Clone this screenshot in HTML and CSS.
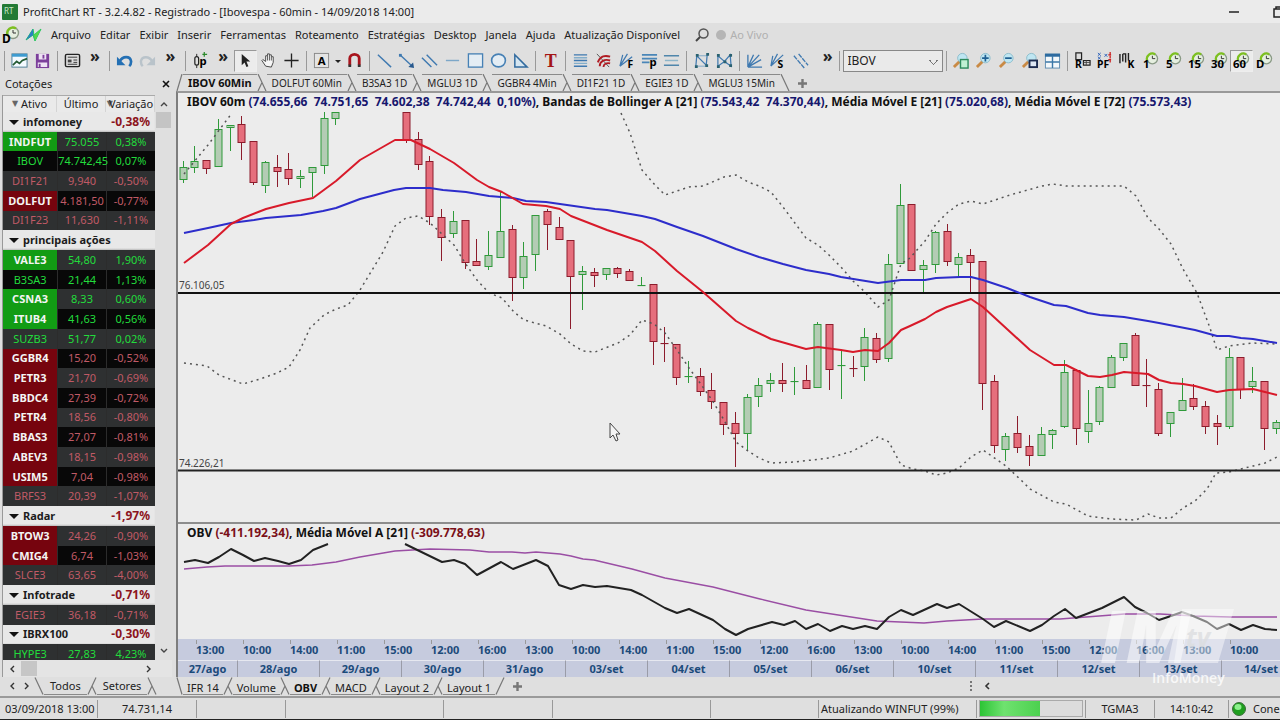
FILE: index.html
```html
<!DOCTYPE html>
<html lang="pt-BR">
<head>
  <meta charset="UTF-8">
  <title>ProfitChart RT</title>
  <link rel="stylesheet" href="styles.css">
</head>
<body>
  <!-- shared shapes -->
  <svg class="defs" width="0" height="0" aria-hidden="true">
    <symbol id="clock" viewBox="0 0 18 18">
      <circle cx="11" cy="7" r="5.5" fill="#e6efe0" stroke="#8a9a86" stroke-width="1.4"/>
      <path d="M5.5 9A5.6 5.6 0 0 1 14 2.6" fill="none" stroke="#7dc020" stroke-width="2.4"/>
      <path d="M11 4v3h3" fill="none" stroke="#333"/>
    </symbol>
    <symbol id="lens" viewBox="0 0 18 18">
      <path d="M2 16l6-6" stroke="#c98a45" stroke-width="3"/>
      <circle cx="11" cy="6.500" r="5" fill="#bfe6f2" stroke="#8bbccb"/>
    </symbol>
    <symbol id="cut-down" viewBox="0 0 10 17">
      <path d="M1 0l8 17M5 8.500L1 17" fill="none" stroke="#777" stroke-width="1.200"/>
    </symbol>
    <symbol id="cut-up" viewBox="0 0 10 17">
      <path d="M9 0L1 17M5 8.500l4 8.500" fill="none" stroke="#777" stroke-width="1.200"/>
    </symbol>
    <symbol id="plus" viewBox="0 0 9 9"><path d="M4.500 0v9M0 4.500h9" stroke="#777" stroke-width="2.400"/></symbol>
  </svg>

  <header class="titlebar">
    <svg class="app-icon" width="16" height="16" viewBox="0 0 16 16"><rect width="16" height="16" rx="1" fill="#237a35"/><text x="2" y="10" font-size="8" fill="#c9e8c9">RT</text></svg>
    <h1>ProfitChart RT - 3.2.4.82 - Registrado - [Ibovespa - 60min - 14/09/2018 14:00]</h1>
    <button class="win-btn" aria-label="Minimizar"><svg width="10" height="10" viewBox="0 0 10 10"><path d="M0 5h10" stroke="#222" stroke-width="1.500"/></svg></button>
    <button class="win-btn last" aria-label="Restaurar"><svg width="12" height="12" viewBox="0 0 12 12"><path d="M1 3h8v8H1zM3 3V1h8v8H9" fill="none" stroke="#222" stroke-width="1.500"/></svg></button>
  </header>

  <nav class="menubar">
    <svg class="menu-d" width="18" height="18" viewBox="0 0 18 18"><use href="#clock"/><text x="0" y="17" font-size="12" font-weight="700">D</text></svg>
    <svg class="menu-leaf" width="17" height="16" viewBox="0 0 17 16"><path d="M1 13L8 2l1 6 7-6-6 12-2-6z" fill="#24c26a" stroke="#24c26a"/><path d="M1 13L8 2l0 6z" fill="#2b7fc4"/><path d="M9 8l7-6-6 12z" fill="#55d84a"/></svg>
    <button>Arquivo</button><button>Editar</button><button>Exibir</button><button>Inserir</button><button>Ferramentas</button><button>Roteamento</button><button>Estratégias</button><button>Desktop</button><button>Janela</button><button>Ajuda</button><button>Atualização Disponível</button>
    <svg class="menu-search" width="14" height="14" viewBox="0 0 14 14"><circle cx="8.500" cy="5.500" r="4.500" fill="none" stroke="#555" stroke-width="1.500"/><path d="M5 9l-4 4" stroke="#444" stroke-width="2"/></svg>
    <span class="live"><i></i>Ao Vivo</span>
  </nav>

  <div class="toolbar">
    <span class="sep"></span>
    <button aria-label="Gráfico"><svg viewBox="0 0 18 18"><rect x="1" y="2" width="16" height="14" fill="#f4faff" stroke="#4c7c94"/><path d="M1 3.500h16" stroke="#3e9bd0" stroke-width="3"/><path d="M2 14l4-4 3 2 3-3 5-2" fill="none" stroke="#245a33" stroke-width="1.800"/></svg></button>
    <button aria-label="Salvar"><svg viewBox="0 0 18 18"><path d="M2 2h14v15H2z" fill="#7c3f9b"/><path d="M5 2h8v6H5zM4 11h10v5H4z" fill="#eee2f4"/><path d="M10 3v4" stroke="#7c3f9b" stroke-width="2"/><path d="M6 12.500v4" stroke="#7c3f9b" stroke-width="2"/></svg></button>
    <span class="sep"></span>
    <button aria-label="Notícias"><svg viewBox="0 0 18 18"><rect x="1.500" y="2.500" width="15" height="13" rx="1.500" fill="#ddd" stroke="#222" stroke-width="1.500"/><path d="M4 5.500h10M10 8.500h4M10 11h4M4 13h10" stroke="#333"/><path d="M4 8h4v3H4z" fill="#444"/></svg></button>
    <button class="more">»</button>
    <span class="sep"></span>
    <button aria-label="Desfazer"><svg viewBox="0 0 18 18"><path d="M4 10c3-6 11-6 12 0 0 3-1 4-2 5" fill="none" stroke="#2470b4" stroke-width="2.800"/><path d="M1 5v9h9z" fill="#2470b4"/></svg></button>
    <button aria-label="Refazer"><svg viewBox="0 0 18 18"><path d="M14 10c-3-6-11-6-12 0 0 3 1 4 2 5" fill="none" stroke="#b9c3ca" stroke-width="2.600"/><path d="M17 5v9H8z" fill="#b9c3ca"/></svg></button>
    <button class="more">»</button>
    <span class="sep"></span>
    <button aria-label="Candle"><svg viewBox="0 0 18 18"><rect x="3" y="5" width="4" height="9" rx="2" fill="none" stroke="#222" stroke-width="1.300"/><path d="M5 2v3M5 14v3" stroke="#222"/><text x="8" y="14" font-size="12" font-weight="700">p</text><path d="M13 0v5M11 2.500h5" stroke="#2b8a2b" stroke-width="1.300"/></svg></button>
    <button class="more">»</button>
    <button class="on" aria-label="Cursor"><svg viewBox="0 0 18 18"><path d="M5 2v12l3-3 2 5 2-1-2-5h4z" fill="#222"/></svg></button>
    <button aria-label="Mover"><svg viewBox="0 0 18 18"><path d="M6 15l-4-6 1-1 3 2V4h2V2h2v1h2v2h2v6l-2 5z" fill="#f6f6f6" stroke="#444"/><path d="M8 4v5M10 3v6M12 5v4" stroke="#555"/></svg></button>
    <button aria-label="Cruz"><svg viewBox="0 0 18 18"><path d="M9 1.500v15M1.500 9h15" stroke="#222" stroke-width="1.400"/></svg></button>
    <span class="sep"></span>
    <button aria-label="Texto"><svg viewBox="0 0 18 18"><rect x="1.500" y="1.500" width="15" height="15" fill="#e4e4e4" stroke="#888"/><text x="5" y="14" font-size="12" font-weight="700">A</text></svg></button>
    <button class="drop" aria-label="Opções"><svg viewBox="0 0 8 8"><path d="M1 3h6L4 6z" fill="#222"/></svg></button>
    <button aria-label="Imã"><svg viewBox="0 0 18 18"><path d="M4 14V7a5 4.500 0 0 1 10 0v7" fill="none" stroke="#a8141c" stroke-width="3"/><path d="M2.500 14.500h3M12.500 14.500h3" stroke="#333" stroke-width="2.500"/></svg></button>
    <span class="sep"></span>
    <button aria-label="Linha"><svg viewBox="0 0 18 18"><path d="M2 3l14 13" stroke="#3f79b0" stroke-width="1.500"/></svg></button>
    <button aria-label="Seta"><svg viewBox="0 0 18 18"><path d="M2 3l12 11" stroke="#3f79b0" stroke-width="1.500"/><path d="M1 2h3v3H1z" fill="#3f79b0"/><path d="M17 17l-1-6-5 5z" fill="#27588d"/></svg></button>
    <button aria-label="Paralelas"><svg viewBox="0 0 18 18"><path d="M1 6l10 10M6 3l11 11" stroke="#3f79b0" stroke-width="1.500"/></svg></button>
    <button aria-label="Horizontal"><svg viewBox="0 0 18 18"><path d="M2 9h14" stroke="#7da7c8" stroke-width="1.500"/></svg></button>
    <button aria-label="Retângulo"><svg viewBox="0 0 18 18"><rect x="1.500" y="2" width="15" height="14" fill="#e4edf4" stroke="#4781b5" stroke-width="1.400"/></svg></button>
    <button aria-label="Elipse"><svg viewBox="0 0 18 18"><ellipse cx="9" cy="9" rx="7.300" ry="6.800" fill="#e4edf4" stroke="#4781b5" stroke-width="1.700"/></svg></button>
    <button aria-label="Triângulo"><svg viewBox="0 0 18 18"><path d="M3 3v13h13z" fill="#d6e6f1" stroke="#326b9f" stroke-width="1.600"/></svg></button>
    <span class="sep"></span>
    <button aria-label="Título"><svg viewBox="0 0 18 18"><text class="serif" x="3" y="16" font-size="19" font-weight="700" fill="#a31515">T</text></svg></button>
    <span class="sep"></span>
    <button aria-label="Retração"><svg viewBox="0 0 18 18"><path d="M2 3h14M2 9h14M2 15h14" stroke="#3f79b0" stroke-width="1.500"/><path d="M2 6h14M2 12h14" stroke="#83aecb" stroke-width="1.500"/></svg></button>
    <button aria-label="Arcos"><svg viewBox="0 0 18 18"><path d="M2 2l13 14" stroke="#555"/><path d="M3 11C5 5 10 3 16 5M5 15c0-5 5-8 11-6M9 16c0-3 3-5 7-4" fill="none" stroke="#b01c24" stroke-width="2"/></svg></button>
    <button aria-label="Leque"><svg viewBox="0 0 18 18"><path d="M2 15L5 3M2 15L10 2M2 15L15 5" stroke="#3f79b0" stroke-width="1.300"/><text x="10" y="17" font-size="11" font-weight="700">F</text></svg></button>
    <button aria-label="Projeção"><svg viewBox="0 0 18 18"><path d="M1 3h16M1 7h16M1 11h8" stroke="#4a86b8" stroke-width="1.800"/><text x="9" y="15" font-size="12" font-weight="700">p</text></svg></button>
    <button aria-label="Canal"><svg viewBox="0 0 18 18"><path d="M1 4h16M1 14h16" stroke="#4f86ab" stroke-width="1.500"/><path d="M2 9h14" stroke="#8db5c9" stroke-width="1.500"/></svg></button>
    <span class="sep"></span>
    <button aria-label="ABC"><svg viewBox="0 0 18 18"><path d="M3 15L4 4l10 10 1-11" fill="none" stroke="#3f79b0" stroke-width="1.300"/><path d="M3 15h11M4 4h11" stroke="#7da7c8"/><path d="M2 14h3v3H2zM3 2h3v3H3zM13 13h3v3h-3zM14 1h3v3h-3z" fill="#2a6170"/></svg></button>
    <button aria-label="XABCD"><svg viewBox="0 0 18 18"><path d="M2 15V4l7 6 6-7 1 12-7-5z" fill="none" stroke="#3f79b0" stroke-width="1.300"/><path d="M1 14h3v3H1zM1 2h3v3H1zM8 9h3v3H8zM14 2h3v3h-3zM14 13h3v3h-3z" fill="#2a6170"/></svg></button>
    <span class="sep"></span>
    <button aria-label="Gann"><svg viewBox="0 0 18 18"><path d="M2 16V3M2 16L8 3M2 16L14 3M2 16l14-8M2 16h15" stroke="#3f79b0" stroke-width="1.400"/></svg></button>
    <button aria-label="Velocidade"><svg viewBox="0 0 18 18"><path d="M2 15L4 4M2 15L9 2M2 15L15 3" stroke="#3f79b0" stroke-width="1.300"/><text x="9" y="17" font-size="11" font-weight="700">S</text></svg></button>
    <button aria-label="Regressão"><svg viewBox="0 0 18 18"><path d="M2 4l11 13M7 2l10 12" stroke="#3f79b0" stroke-width="1.400" stroke-dasharray="5 1"/></svg></button>
    <button class="more wide">»</button>
    <span class="sep"></span>
    <select aria-label="Ativo"><option>IBOV</option></select>
    <span class="sep"></span>
    <button aria-label="Zoom área"><svg viewBox="0 0 18 18"><use href="#lens"/><rect x="9" y="8" width="8" height="9" fill="#bff0d4" stroke="#2c8a5d" stroke-width="1.500"/></svg></button>
    <button aria-label="Mais zoom"><svg viewBox="0 0 18 18"><use href="#lens"/><path d="M11 3v7M7.500 6.500h7" stroke="#1f5f92" stroke-width="1.800"/></svg></button>
    <button aria-label="Menos zoom"><svg viewBox="0 0 18 18"><use href="#lens"/><path d="M7.500 6.500h7" stroke="#1f5f92" stroke-width="1.800"/></svg></button>
    <button aria-label="Zoom tela"><svg viewBox="0 0 18 18"><use href="#lens"/><rect x="9" y="9" width="8" height="7" fill="#dfe8f4" stroke="#1d2c50" stroke-width="2"/></svg></button>
    <button aria-label="Grade"><svg viewBox="0 0 18 18"><rect x="1.500" y="2" width="15" height="15" fill="#f4f8fb" stroke="#5f8db0"/><path d="M1 3.500h16" stroke="#2d6ba0" stroke-width="3"/><path d="M9 4v13M1.500 10.500h15" stroke="#3c78a8" stroke-width="1.500"/></svg></button>
    <span class="sep"></span>
    <button aria-label="Renko"><svg viewBox="0 0 18 18"><path d="M2 1h6v7H2zM10 9h7v5h-7z" fill="#ddd" stroke="#222" stroke-width="1.300"/><path d="M10 11h7M13 9v5" stroke="#444"/><text x="1" y="17" font-size="11" font-weight="700">R</text></svg></button>
    <button aria-label="Ponto figura"><svg viewBox="0 0 18 18"><path d="M2 1l3 3M5 1L2 4M9 2l3 3M12 2L9 5M2 5l3 3M5 5L2 8" stroke="#2b5fb8"/><path d="M15 0v12M13 3h4M13 8h4" stroke="#c22" stroke-width="1.400" stroke-dasharray="3 1"/><text x="1" y="17" font-size="11" font-weight="700">PF</text></svg></button>
    <button aria-label="Kagi"><svg viewBox="0 0 18 18"><path d="M1 2v10M4 2v8M4 2h3v9M10 1v8" fill="none" stroke="#222" stroke-width="1.500"/><text x="9" y="17" font-size="11" font-weight="700">K</text></svg></button>
    <button><svg viewBox="0 0 18 18"><use href="#clock"/><text x="1" y="17" font-size="12" font-weight="700">1</text></svg></button>
    <button><svg viewBox="0 0 18 18"><use href="#clock"/><text x="1" y="17" font-size="12" font-weight="700">5</text></svg></button>
    <button><svg viewBox="0 0 18 18"><use href="#clock"/><text x="0" y="17" font-size="12" font-weight="700">15</text></svg></button>
    <button><svg viewBox="0 0 18 18"><use href="#clock"/><text x="0" y="17" font-size="12" font-weight="700">30</text></svg></button>
    <button class="on"><svg viewBox="0 0 18 18"><use href="#clock"/><text x="0" y="17" font-size="12" font-weight="700">60</text></svg></button>
    <button><svg viewBox="0 0 18 18"><use href="#clock"/><text x="0" y="17" font-size="12" font-weight="700">D</text></svg></button>
  </div>

  <main class="workspace">
    <aside class="quotes">
      <div class="quotes-title"><h2>Cotações</h2><button aria-label="Fechar"><svg width="8" height="8" viewBox="0 0 8 8"><path d="M1 1l6 6M7 1L1 7" stroke="#111" stroke-width="1.600"/></svg></button></div>
      <div class="quotes-box">
        <div class="quotes-head"><span><b class="sort">&#9660;</b> Ativo</span><span>Último</span><span><b class="sort">&#9660;</b>Variação</span></div>
        <div class="quotes-scroll">
          <table>
            <colgroup><col class="c1"><col class="c2"><col class="c3"></colgroup>
            <tbody>
              <tr class="group"><th colspan="2">infomoney</th><td>-0,38%</td></tr>
              <tr class="up hot"><td>INDFUT</td><td>75.055</td><td>0,38%</td></tr>
              <tr class="up"><td>IBOV</td><td>74.742,45</td><td>0,07%</td></tr>
              <tr class="down"><td>DI1F21</td><td>9,940</td><td>-0,50%</td></tr>
              <tr class="down hot"><td>DOLFUT</td><td>4.181,50</td><td>-0,77%</td></tr>
              <tr class="down"><td>DI1F23</td><td>11,630</td><td>-1,11%</td></tr>
            </tbody>
            <tbody>
              <tr class="group"><th colspan="3">principais ações</th></tr>
              <tr class="up hot"><td>VALE3</td><td>54,80</td><td>1,90%</td></tr>
              <tr class="up"><td>B3SA3</td><td>21,44</td><td>1,13%</td></tr>
              <tr class="up hot"><td>CSNA3</td><td>8,33</td><td>0,60%</td></tr>
              <tr class="up hot"><td>ITUB4</td><td>41,63</td><td>0,56%</td></tr>
              <tr class="up"><td>SUZB3</td><td>51,77</td><td>0,02%</td></tr>
              <tr class="down hot"><td>GGBR4</td><td>15,20</td><td>-0,52%</td></tr>
              <tr class="down hot"><td>PETR3</td><td>21,70</td><td>-0,69%</td></tr>
              <tr class="down hot"><td>BBDC4</td><td>27,39</td><td>-0,72%</td></tr>
              <tr class="down hot"><td>PETR4</td><td>18,56</td><td>-0,80%</td></tr>
              <tr class="down hot"><td>BBAS3</td><td>27,07</td><td>-0,81%</td></tr>
              <tr class="down hot"><td>ABEV3</td><td>18,15</td><td>-0,98%</td></tr>
              <tr class="down hot"><td>USIM5</td><td>7,04</td><td>-0,98%</td></tr>
              <tr class="down"><td>BRFS3</td><td>20,39</td><td>-1,07%</td></tr>
            </tbody>
            <tbody>
              <tr class="group"><th colspan="2">Radar</th><td>-1,97%</td></tr>
              <tr class="down hot"><td>BTOW3</td><td>24,26</td><td>-0,90%</td></tr>
              <tr class="down hot"><td>CMIG4</td><td>6,74</td><td>-1,03%</td></tr>
              <tr class="down"><td>SLCE3</td><td>63,65</td><td>-4,00%</td></tr>
            </tbody>
            <tbody>
              <tr class="group"><th colspan="2">Infotrade</th><td>-0,71%</td></tr>
              <tr class="down"><td>EGIE3</td><td>36,18</td><td>-0,71%</td></tr>
            </tbody>
            <tbody>
              <tr class="group"><th colspan="2">IBRX100</th><td>-0,30%</td></tr>
              <tr class="up"><td>HYPE3</td><td>27,83</td><td>4,23%</td></tr>
            </tbody>
          </table>
        </div>
        <div class="vbar">
          <button aria-label="Subir"><svg width="8" height="6" viewBox="0 0 8 6"><path d="M1 5l3-3 3 3" fill="none" stroke="#444" stroke-width="1.400"/></svg></button>
          <i></i>
          <button class="end" aria-label="Descer"><svg width="8" height="6" viewBox="0 0 8 6"><path d="M1 1l3 3 3-3" fill="none" stroke="#444" stroke-width="1.400"/></svg></button>
        </div>
      </div>
      <div class="hbar">
        <button aria-label="Esquerda"><svg width="6" height="8" viewBox="0 0 6 8"><path d="M5 1L2 4l3 3" fill="none" stroke="#333" stroke-width="1.400"/></svg></button>
        <i></i>
        <button class="end" aria-label="Direita"><svg width="6" height="8" viewBox="0 0 6 8"><path d="M1 1l3 3-3 3" fill="none" stroke="#333" stroke-width="1.400"/></svg></button>
      </div>
      <div class="tabs low side">
        <button class="arrow" aria-label="Anterior"><svg width="6" height="8" viewBox="0 0 6 8"><path d="M5 1L2 4l3 3" fill="none" stroke="#333" stroke-width="1.400"/></svg></button>
        <button class="arrow" aria-label="Próxima"><svg width="6" height="8" viewBox="0 0 6 8"><path d="M1 1l3 3-3 3" fill="none" stroke="#333" stroke-width="1.400"/></svg></button>
        <svg class="cut" viewBox="0 0 10 17"><path d="M1 0l8 17" stroke="#777" stroke-width="1.200"/></svg>
        <button class="tab">Todos</button>
        <svg class="cut"><use href="#cut-up"/></svg>
        <button class="tab">Setores</button>
        <svg class="cut"><use href="#cut-down"/></svg>
      </div>
    </aside>

    <section class="charts">
      <div class="tabs top">
        <svg class="cut first" viewBox="0 0 7 17"><path d="M1 17L6 0" stroke="#777" stroke-width="1.200"/></svg>
        <button class="tab active">IBOV 60Min</button>
        <svg class="cut"><use href="#cut-down"/></svg>
        <button class="tab">DOLFUT 60Min</button>
        <svg class="cut"><use href="#cut-down"/></svg>
        <button class="tab">B3SA3 1D</button>
        <svg class="cut"><use href="#cut-down"/></svg>
        <button class="tab">MGLU3 1D</button>
        <svg class="cut"><use href="#cut-down"/></svg>
        <button class="tab">GGBR4 4Min</button>
        <svg class="cut"><use href="#cut-down"/></svg>
        <button class="tab">DI1F21 1D</button>
        <svg class="cut"><use href="#cut-down"/></svg>
        <button class="tab">EGIE3 1D</button>
        <svg class="cut"><use href="#cut-down"/></svg>
        <button class="tab">MGLU3 15Min</button>
        <svg class="cut" viewBox="0 0 10 17"><path d="M1 0l8 17" stroke="#777" stroke-width="1.200"/></svg>
        <button class="add" aria-label="Nova aba"><svg width="9" height="9"><use href="#plus"/></svg></button>
      </div>

      <div class="panes">
        <p class="legend">IBOV 60m <em>(74.655,66  74.751,65  74.602,38  74.742,44  0,10%)</em>, Bandas de Bollinger A [21] <em>(75.543,42  74.370,44)</em>, Média Móvel E [21] <em>(75.020,68)</em>, Média Móvel E [72] <em>(75.573,43)</em></p>
        <svg class="plot" viewBox="178 112 1102 410">
          <g id="candles"></g>
          <g class="band">
            <polyline points="184,174 208,145 232,113"/>
            <polyline points="621,113 630,133 642,170 655,185 665,195 689,187 703,186 724,177 736,175 748,182 759,186 771,192 783,207 806,238 818,245 829,255 841,267 853,281 865,292 878,307 889,300 901,264 910,258 925,241 936,224 947,213 959,204 971,201 983,204 1010,195 1042,186 1053,184 1066,186 1124,186 1136,196 1148,218 1159,229 1171,244 1183,269 1197,293 1210,328 1217,350 1229,346 1253,343 1277,344"/>
            <polyline points="184,363 207,366 219,375 243,384 260,379 277,373 289,367 300,350 310,328 324,315 336,309 348,305 360,290 383,252 395,226 406,218 418,216 430,223 454,245 465,263 477,280 489,293 502,298 514,312 524,320 546,326 560,334 571,344 583,351 595,352 618,343 630,335 642,320 654,324 665,333 677,350 689,368 700,383 712,400 724,420 736,442 748,451 759,458 771,463 795,462 829,458 853,451 878,437 889,442 901,465 913,469 925,471 936,475 947,473 959,468 971,457 983,450 1006,466 1022,481 1030,489 1054,502 1066,504 1088,516 1112,519 1136,520 1148,514 1159,518 1171,518 1183,508 1195,501 1207,489 1216,473 1229,472 1253,466 1265,463 1277,457"/>
          </g>
          <path d="M178 293h1102" stroke="#111" stroke-width="2"/>
          <path d="M178 470.500h1102" stroke="#222" stroke-width="2"/>
          <polyline class="ema72" points="184,233 208,228 231,223 254,220 266,218 301,215 323,211 336,208 360,199 394,190 406,188 430,188 443,190 466,192 489,196 513,198 526,201 546,202 560,204 595,209 607,210 642,216 655,219 677,227 703,236 736,249 759,257 783,264 806,270 829,274 841,277 878,283 901,280 925,280 936,278 960,277 971,277 983,280 1007,288 1030,297 1054,305 1066,306 1088,313 1100,315 1124,317 1148,321 1159,323 1195,330 1217,336 1229,336 1241,338 1253,339 1277,343"/>
          <polyline class="ema21" points="184,263 208,245 231,224 243,218 266,209 289,203 313,198 336,181 360,160 395,140 411,140 430,149 454,163 477,180 489,187 502,192 523,204 546,206 560,209 571,216 607,230 642,242 655,251 677,271 703,292 736,321 748,328 771,339 806,349 818,347 841,350 853,352 865,350 878,351 889,343 901,330 910,326 925,319 936,312 947,307 971,299 983,307 1030,350 1054,365 1066,365 1076,370 1088,376 1100,377 1112,375 1124,372 1148,374 1159,380 1171,383 1183,384 1195,386 1217,392 1229,390 1253,389 1265,392 1277,395"/>
          <text class="level" x="179" y="289">76.106,05</text>
          <text class="level" x="179" y="467">74.226,21</text>
          <path d="M610 423v15l3-3 3 6 2-1-2-6h4z" fill="#f4f4f4" stroke="#444"/>
        </svg>
        <p class="legend split">OBV <em class="neg">(-411.192,34)</em>, Média Móvel A [21] <em class="neg">(-309.778,63)</em></p>
        <svg class="plot" viewBox="178 543 1102 96">
          <polyline class="obv-avg" points="184,569 207,567 225,566 289,566 312,565 336,562 360,557 395,551 430,549 470,550 489,552 512,552 525,553 536,552 560,554 571,556 583,559 594,560 632,569 665,578 713,587 760,599 806,610 877,621 924,623 947,621 983,619 1060,619 1112,615 1124,614 1160,614 1195,616 1230,617 1277,617"/>
          <polyline class="obv" points="184,562 195,560 208,563 219,557 231,549 243,555 254,561 265,558 278,561 289,564 301,560 313,550 328,544"/>
          <polyline class="obv" points="405,544 442,562 454,560 465,564 477,575 501,562 513,569 536,560 548,566 559,585 571,589 583,585 595,587 607,586 631,590 642,595 665,608 677,613 689,609 713,620 725,629 736,635 748,629 772,622 784,625 795,621 806,629 818,624 830,631 842,626 853,629 865,626 877,629 889,617 901,610 913,615 937,604 947,608 959,604 983,619 994,627 1006,621 1030,631 1042,625 1054,616 1065,609 1076,618 1102,608 1112,603 1124,597 1135,607 1147,613 1159,620 1171,616 1182,612 1193,616 1207,622 1217,629 1229,624 1241,630 1253,625 1265,629 1277,630"/>
        </svg>
        <div class="hours">
          <span>13:00</span><span>10:00</span><span>14:00</span><span>11:00</span><span>15:00</span><span>12:00</span><span>16:00</span><span>13:00</span><span>10:00</span><span>14:00</span><span>11:00</span><span>15:00</span><span>12:00</span><span>16:00</span><span>13:00</span><span>10:00</span><span>14:00</span><span>11:00</span><span>15:00</span><span>12:00</span><span>16:00</span><span>13:00</span><span>10:00</span>
        </div>
        <div class="days">
          <span>27/ago</span><span>28/ago</span><span>29/ago</span><span>30/ago</span><span>31/ago</span><span>03/set</span><span>04/set</span><span>05/set</span><span>06/set</span><span>10/set</span><span>11/set</span><span>12/set</span><span>13/set</span><span>14/set</span>
        </div>
        <svg class="watermark" width="140" height="82" viewBox="0 0 140 82">
          <path d="M84 4h52l-16 54H76z" fill="#fff" fill-opacity=".45"/>
          <text x="2" y="58" font-size="72" font-weight="800" font-style="italic" fill="#fff" fill-opacity=".5">IM</text>
          <text x="88" y="42" font-size="26" font-weight="700" font-style="italic" fill="#dcdee0" fill-opacity=".8">tv</text>
          <text x="54" y="78" font-size="14" font-weight="600" fill="#fff" fill-opacity=".8">InfoMoney</text>
        </svg>
      </div>

      <div class="tabs low">
        <svg class="cut first" viewBox="0 0 7 17"><path d="M1 0l5 17" stroke="#777" stroke-width="1.200"/></svg>
        <button class="tab">IFR 14</button>
        <svg class="cut"><use href="#cut-up"/></svg>
        <button class="tab">Volume</button>
        <svg class="cut"><use href="#cut-down"/></svg>
        <button class="tab active">OBV</button>
        <svg class="cut"><use href="#cut-up"/></svg>
        <button class="tab">MACD</button>
        <svg class="cut"><use href="#cut-up"/></svg>
        <button class="tab">Layout 2</button>
        <svg class="cut"><use href="#cut-up"/></svg>
        <button class="tab">Layout 1</button>
        <svg class="cut" viewBox="0 0 10 17"><path d="M1 17L9 0" stroke="#777" stroke-width="1.200"/></svg>
        <button class="add" aria-label="Novo layout"><svg width="9" height="9"><use href="#plus"/></svg></button>
        <div class="pager"><svg width="2" height="10" viewBox="0 0 2 10"><path d="M1 0v10" stroke="#555" stroke-width="1.500" stroke-dasharray="2 2"/></svg><button aria-label="Voltar"><svg width="6" height="8" viewBox="0 0 6 8"><path d="M5 1L2 4l3 3" fill="none" stroke="#333" stroke-width="1.600"/></svg></button></div>
      </div>
    </section>
  </main>

  <footer class="status">
    <span>03/09/2018 13:00</span><span class="mid">74.731,14</span><span></span><span></span><span></span><span></span><span></span>
    <span class="load">Atualizando WINFUT (99%)</span>
    <span class="load"><progress max="100" value="59" aria-label="Progresso"></progress></span>
    <span class="mid">TGMA3</span><span class="mid">14:10:42</span>
    <span class="conn"><svg width="14" height="14" viewBox="0 0 14 14"><circle cx="7" cy="7" r="6.500" fill="#1f9e1f" stroke="#3c6d3c"/><ellipse cx="6" cy="5" rx="3.500" ry="3" fill="#8cf08c"/></svg>Cone</span>
  </footer>
  <script src="chart.js"></script>
</body>
</html>
```

FILE: styles.css
```css
* {
  box-sizing: border-box;
}
html, body {
  margin: 0;
  padding: 0;
}
body {
  min-height: 100vh;
  display: flex;
  flex-direction: column;
  background: #dfdfdf;
  font-family: "Noto Sans", "DejaVu Sans", sans-serif;
  font-size: 11px;
  line-height: 16px;
  color: #222;
  overflow: hidden;
}
button {
  font: inherit;
  color: inherit;
  background: none;
  border: none;
  padding: 0;
  margin: 0;
  white-space: nowrap;
}
svg {
  display: block;
  flex: none;
}
.defs {
  position: absolute;
}
h1, h2, p {
  margin: 0;
  font-size: 11px;
  font-weight: normal;
}

/* title and menu */
.titlebar {
  height: 23px;
  display: flex;
  align-items: center;
  background: #ebebeb;
  padding-left: 2px;
}
.titlebar h1 {
  flex: 1;
  margin-left: 5px;
  white-space: nowrap;
}
.win-btn {
  margin-right: 34px;
}
.win-btn.last {
  margin-right: -5px;
}
.menubar {
  height: 24px;
  display: flex;
  align-items: center;
  gap: 9px;
  padding-left: 2px;
}
.menubar svg, .toolbar svg {
  overflow: visible;
}
.menu-d {
  margin-right: -4px;
}
.menu-search {
  margin-left: 6px;
}
.live {
  display: flex;
  align-items: center;
  gap: 4px;
  margin-left: -2px;
  color: #b0b0b0;
}
.live i {
  width: 10px;
  height: 10px;
  border-radius: 50%;
  background: #b5b5b5;
}

/* toolbar */
.toolbar {
  height: 27px;
  display: flex;
  align-items: center;
  padding: 0 4px 0 1px;
}
.toolbar button {
  flex: 1 0 22px;
  height: 22px;
  display: flex;
  align-items: center;
  justify-content: center;
  border: 1px solid transparent;
}
.toolbar button svg {
  width: 17px;
  height: 17px;
}
.toolbar .serif {
  font-family: "Liberation Serif", serif;
}
.toolbar .on {
  background: #ececec;
  border-color: #999 #eee #eee #999;
}
.toolbar .more {
  font-size: 16px;
  font-weight: bold;
  padding-bottom: 10px;
}
.toolbar .wide {
  flex: 0 0 24px;
  justify-content: flex-end;
  padding-right: 2px;
}
.toolbar .drop {
  flex: 0 0 9px;
}
.toolbar .drop svg {
  width: 8px;
  height: 8px;
}
.sep {
  flex: 0 0 7px;
  height: 20px;
  background: linear-gradient(#999, #999) 3px 0 / 1px 20px no-repeat;
}
.toolbar select {
  flex: 0 0 100px;
  height: 22px;
  appearance: none;
  font: inherit;
  font-size: 12px;
  line-height: 16px;
  color: #222;
  border: 1px solid #888;
  border-radius: 0;
  padding: 0 4px;
  background: linear-gradient(45deg, transparent 45%, #777 45% 60%, transparent 60%) 85px 9px / 5px 5px no-repeat,
    linear-gradient(-45deg, transparent 45%, #777 45% 60%, transparent 60%) 89px 9px / 5px 5px no-repeat, #eaeaea;
}

/* quotes */
.workspace {
  flex: 1;
  display: flex;
}
.quotes {
  flex: 0 0 176px;
  min-width: 0;
  padding: 0 4px 0 2px;
  display: flex;
  flex-direction: column;
}
.quotes-title {
  height: 21px;
  display: flex;
  align-items: center;
  justify-content: space-between;
  padding: 0 2px 2px 3px;
}
.quotes-box {
  display: grid;
  grid-template-columns: minmax(0, 1fr) 17px;
  grid-template-rows: 17px 548px;
  border-left: 1px solid #999;
}
.quotes-head {
  display: grid;
  grid-template-columns: 54fr 49fr 49fr;
  background: #eaeaea;
  border-top: 1px solid #aaa;
}
.quotes-head span {
  text-align: center;
  border-right: 1px solid #d4d4d4;
  white-space: nowrap;
}
.sort {
  font-size: 8px;
  line-height: 1px;
  color: #666;
  vertical-align: 2px;
}
.quotes-head span:last-child .sort {
  margin-right: -4px;
}
.quotes-scroll {
  grid-column: 1;
  overflow: hidden;
}
.quotes table {
  width: 100%;
  height: 552px;
  border-collapse: collapse;
  table-layout: fixed;
}
.c1 { width: 36%; }
.c2 { width: 32%; }
.c3 { width: 32%; }
.quotes td, .quotes th {
  padding: 0;
  text-align: center;
  white-space: nowrap;
}
.quotes td + td {
  border-left: 1px solid #2c2c2c;
}
.quotes tr {
  background: #080808;
}
.quotes tr:nth-child(even) {
  background: #2e3031;
}
.quotes tr.group {
  background: linear-gradient(#e8e8e8 90%, #bbb);
  font-weight: bold;
}
.quotes .group th {
  text-align: left;
  color: #1c1c1c;
}
.quotes .group th::before {
  content: "";
  display: inline-block;
  margin: 0 4px 1px 6px;
  border: 5px solid transparent;
  border-top-color: #111;
  border-bottom: 0;
}
.quotes .group td {
  font-size: 12px;
  color: #8c1420;
  border: none;
}
.up { color: #22dc3c; }
.down { color: #c05a66; }
.hot td:first-child {
  color: #f4f4f4;
  font-weight: bold;
}
.up.hot td:first-child { background: #129c14; }
.down.hot td:first-child { background: #76040e; }

.vbar {
  grid-column: 2;
  grid-row: 1 / 3;
  display: flex;
  flex-direction: column;
  align-items: center;
  padding-top: 6px;
}
.vbar i {
  width: 15px;
  height: 16px;
  margin-top: 5px;
  background: #c4c4c4;
}
.vbar .end {
  margin: auto 0 6px;
}
.hbar {
  height: 17px;
  display: flex;
  align-items: center;
  padding: 0 20px 0 6px;
  border-left: 1px solid #999;
  background: #e4e4e4;
}
.hbar i {
  width: 16px;
  height: 15px;
  margin-left: 6px;
  background: #c6c6c6;
}
.hbar .end {
  margin-left: auto;
}

/* tabs */
.tabs {
  display: flex;
  align-items: stretch;
  height: 17px;
}
.tabs .cut {
  width: 10px;
  height: 17px;
}
.tabs .first {
  width: 7px;
}
.tab {
  padding: 0 5px;
  border: solid #8a8a8a;
  border-width: 1px 0 0;
}
.tabs.top .tab {
  font-size: 10px;
}
.tabs.top .active {
  font-size: 11px;
}
.tabs.low .tab {
  padding: 3px 4px 0;
  border-width: 0 0 1px;
}
.tab.active {
  font-weight: bold;
  color: #111;
}
.tabs .add {
  margin-left: 8px;
}
.tabs.low {
  height: 19px;
  padding-bottom: 1px;
}
.tabs.low .cut {
  height: 18px;
}
.tabs.side {
  padding-left: 2px;
}
.tabs.side .tab {
  padding: 1px 6px 0;
}
.tabs .arrow {
  width: 15px;
  display: flex;
  align-items: center;
  justify-content: center;
}
.pager {
  width: 310px;
  margin-left: auto;
  display: flex;
  align-items: center;
  gap: 12px;
}
.tabs .add svg {
  margin-top: 1px;
}

/* charts */
.charts {
  flex: 1;
  min-width: 0;
}
.panes {
  position: relative;
  border-left: 2px solid #7d7d7d;
  border-top: 2px solid #999;
  background: #ececec;
}
.legend {
  height: 19px;
  padding-left: 9px;
  font-size: 12px;
  font-weight: bold;
  line-height: 18px;
  white-space: pre;
  overflow: hidden;
  color: #111;
}
.legend em {
  font-style: normal;
  color: #17176e;
}
.legend .neg {
  color: #7a1018;
}
.legend.split {
  height: 21px;
  border-top: 2px solid #8d8d8d;
}
.plot {
  width: 100%;
  height: auto;
}
.plot polyline {
  fill: none;
  stroke-linejoin: round;
}
.band polyline {
  stroke: #555;
  stroke-width: 1.5;
  stroke-dasharray: 2 4;
}
.ema21 { stroke: #d81a2a; stroke-width: 2; }
.ema72 { stroke: #2d2dcb; stroke-width: 2; }
.obv { stroke: #222; stroke-width: 2; }
.obv-avg { stroke: #9a4ea4; stroke-width: 1.3; }
.level {
  font-size: 10px;
  fill: #444;
}
.bull { fill: #b4ccb4; stroke: #2f9a3a; }
.bear { fill: #e66e7c; stroke: #8c1c2c; }
.hours {
  display: flex;
  height: 21px;
  padding: 0 3px 0 18px;
  background: #c6cbde;
  color: #1b4a7a;
  font-weight: bold;
  line-height: 22px;
}
.hours span {
  flex: 1;
  background: linear-gradient(#999, #999) 0 1px / 1px 4px no-repeat;
}
.days {
  display: grid;
  grid-template-columns: 60fr repeat(12, 82fr) 58fr;
  height: 17px;
  background: #c6cbde;
  color: #1b4a7a;
  font-weight: bold;
}
.days span {
  text-align: center;
  border-right: 1px solid #9a9ca8;
  border-top: 1px solid #e6e8f0;
  overflow: hidden;
}
.days span:last-child {
  text-align: right;
  padding-right: 2px;
  border-right: none;
}
.watermark {
  position: absolute;
  right: 42px;
  bottom: -10px;
  font-family: "Open Sans", sans-serif;
}

/* status bar */
.status {
  display: grid;
  grid-template-columns: 98fr 99fr 89fr 158fr 109fr 158fr 108fr 158fr 109fr 69fr 74fr 51fr;
  height: 24px;
  padding: 2px 0 1px;
  border-top: 2px solid #9a9a9a;
  border-bottom: 1px solid #222;
}
.status span {
  padding-left: 5px;
  min-width: 0;
  overflow: hidden;
  white-space: nowrap;
  border-right: 1px solid #999;
  line-height: 18px;
}
.status .mid {
  padding: 0;
  text-align: center;
}
.status .load {
  padding: 0 2px;
}
.status .conn {
  display: flex;
  align-items: center;
  gap: 7px;
  padding-left: 3px;
  border: none;
}
progress {
  appearance: none;
  display: block;
  width: 100%;
  height: 17px;
  border: 1px solid #aaa;
}
progress::-webkit-progress-bar { background: #dcdcdc; }
progress::-webkit-progress-value { background: linear-gradient(90deg, #2cc435, #6fe26f 40%, #4cd04f); }
```

FILE: chart.js
```js
// [slot, direction, high, top, bottom, low]; 'u' closes up, 'd' closes down
const bars = [
  [0,'u',161,167,180,183],[1,'u',146,161,168,173],[2,'d',160,160,169,174],[3,'u',119,129,167,167],
  [4,'u',125,125,128,151],[5,'d',116,124,143,160],[6,'d',141,141,183,185],[7,'u',161,162,186,193],
  [8,'d',155,167,172,187],[9,'d',153,169,179,185],[10,'u',170,176,179,188],[11,'u',167,167,173,197],
  [12,'u',112,118,166,174],[13,'u',112,112,119,125],[19,'d',112,112,141,143],[20,'d',132,139,165,170],
  [21,'d',156,161,217,225],[22,'d',209,217,238,261],[23,'u',211,221,234,238],[24,'d',220,220,263,269],
  [25,'d',239,261,266,266],[26,'u',231,255,267,270],[27,'u',192,231,258,258],[28,'d',225,229,278,301],
  [29,'u',242,256,278,289],[30,'u',215,215,255,271],[31,'d',209,211,225,250],[32,'d',217,227,240,240],
  [33,'d',240,240,277,329],[34,'u',266,271,275,310],[35,'d',268,272,276,287],[36,'u',268,268,275,280],
  [37,'d',267,268,274,278],[38,'d',269,271,281,281],[39,'u',277,285,286,286],[40,'d',284,284,342,365],
  [41,'d',327,343,344,362],[42,'d',344,344,378,385],[43,'u',361,376,377,383],[44,'d',368,376,392,396],
  [45,'d',373,390,402,409],[46,'d',402,402,425,435],[47,'d',412,423,434,467],[48,'u',394,397,434,450],
  [49,'u',378,385,397,407],[50,'u',373,380,384,392],[51,'d',363,380,384,392],[52,'u',367,381,382,395],
  [53,'d',365,380,389,389],[54,'u',322,324,388,388],[55,'d',324,324,370,390],[56,'u',350,365,366,399],
  [57,'d',356,368,369,377],[58,'u',328,337,367,381],[59,'d',333,338,360,363],[60,'u',254,264,359,362],
  [61,'u',184,205,264,264],[62,'d',204,204,271,271],[63,'u',260,265,270,293],[64,'u',231,232,265,273],
  [65,'d',224,231,262,266],[66,'u',253,257,265,277],[67,'d',249,255,263,293],[68,'d',261,261,384,410],
  [69,'d',375,381,446,453],[70,'u',433,436,450,461],[71,'d',416,433,448,453],[72,'d',435,446,456,466],
  [73,'u',427,434,456,456],[74,'u',429,430,435,449],[75,'u',360,372,427,428],[76,'d',369,370,429,445],
  [77,'u',390,423,432,443],[78,'u',386,387,422,425],[79,'u',355,357,388,388],[80,'u',343,343,358,361],
  [81,'d',333,335,386,386],[82,'d',359,385,386,407],[83,'d',383,389,434,436],[84,'u',412,412,424,437],
  [85,'u',378,400,411,411],[86,'d',384,398,407,410],[87,'d',401,406,427,434],[88,'d',415,423,427,445],
  [89,'u',348,357,427,429],[90,'d',357,357,390,399],[91,'u',367,381,387,393],[92,'d',381,381,429,450],
  [93,'u',420,422,429,434]
];

const first = 183.5;
const step = 11.755;
const ns = 'http://www.w3.org/2000/svg';
const layer = document.getElementById('candles');

bars.forEach(([slot, dir, high, top, bottom, low]) => {
  const x = Math.round(first + slot * step) - 0.5;
  const g = document.createElementNS(ns, 'g');
  g.setAttribute('class', dir === 'u' ? 'bull' : 'bear');

  const wick = document.createElementNS(ns, 'path');
  wick.setAttribute('d', `M${x} ${high}V${top}M${x} ${bottom}V${low}`);
  g.appendChild(wick);

  const body = document.createElementNS(ns, 'rect');
  body.setAttribute('x', x - 3.5);
  body.setAttribute('y', top + 0.5);
  body.setAttribute('width', 7);
  body.setAttribute('height', Math.max(bottom - top - 1, 0.1));
  g.appendChild(body);

  layer.appendChild(g);
});
```
